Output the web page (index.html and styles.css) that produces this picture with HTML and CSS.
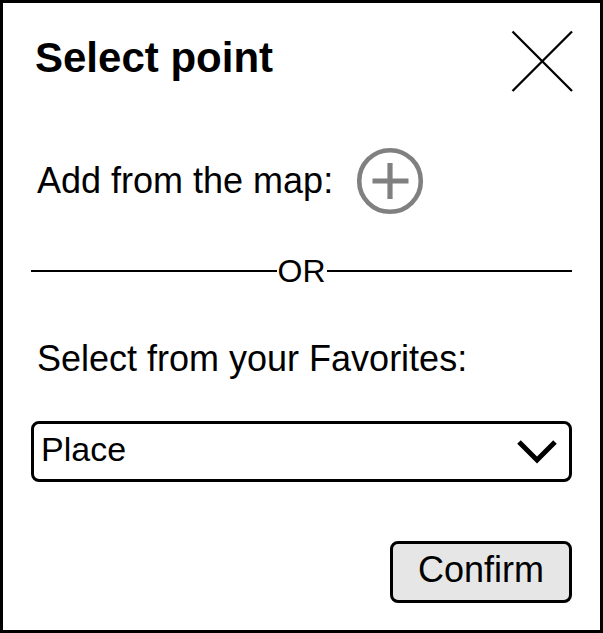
FILE: index.html
```html
<!DOCTYPE html>
<html>
<head>
<meta charset="utf-8">
<link rel="stylesheet" href="styles.css">
</head>
<body>
<div class="dialog">
  <div class="header">
    <h1 class="title">Select point</h1>
    <svg class="close" width="62" height="62" viewBox="0 0 62 62">
      <line x1="1.5" y1="1.5" x2="61" y2="61" stroke="#000" stroke-width="2.3"/>
      <line x1="61" y1="1.5" x2="1.5" y2="61" stroke="#000" stroke-width="2.3"/>
    </svg>
  </div>
  <div class="add-row">
    <span class="label">Add from the map:</span>
    <svg class="plus" width="70" height="70" viewBox="0 0 70 70">
      <circle cx="35" cy="35" r="30.8" fill="none" stroke="#808080" stroke-width="4.6"/>
      <line x1="17.5" y1="35" x2="53.5" y2="35" stroke="#808080" stroke-width="5.2"/>
      <line x1="35" y1="17" x2="35" y2="53" stroke="#808080" stroke-width="5.2"/>
    </svg>
  </div>
  <div class="or-row">
    <span class="rule"></span>
    <span class="or">OR</span>
    <span class="rule"></span>
  </div>
  <div class="label fav">Select from your Favorites:</div>
  <div class="select">
    <span class="value">Place</span>
    <svg class="chev" width="44" height="28" viewBox="0 0 44 28">
      <polyline points="3,4 21,22 39,4" fill="none" stroke="#000" stroke-width="5"/>
    </svg>
  </div>
  <div class="btn">Confirm</div>
</div>
</body>
</html>
```

FILE: styles.css
```css
html, body {
  margin: 0;
  padding: 0;
  background: #fff;
}
body {
  font-family: "Liberation Sans", Arial, sans-serif;
  color: #000;
}
.dialog {
  width: 603px;
  height: 633px;
  box-sizing: border-box;
  border: 3px solid #000;
  padding: 0 28px;
  display: flex;
  flex-direction: column;
}
.header {
  display: flex;
  justify-content: space-between;
  align-items: flex-start;
  padding-top: 27px;
}
.title {
  margin: 4px 0 0 4px;
  font-size: 42px;
  line-height: 48px;
  font-weight: bold;
}
.close {
  display: block;
  margin-right: -1px;
}
.add-row {
  display: flex;
  align-items: center;
  margin-top: 54px;
}
.label {
  font-size: 36px;
  line-height: 40px;
  margin-left: 6px;
}
.plus {
  display: block;
  margin-left: 22px;
}
.or-row {
  display: flex;
  align-items: center;
  margin-top: 40px;
  height: 30px;
}
.rule {
  flex: 1;
  height: 2px;
  background: #000;
}
.or {
  font-size: 32px;
  line-height: 30px;
  padding: 0 1px;
}
.fav {
  margin-top: 53px;
}
.select {
  margin-top: 42px;
  height: 61px;
  box-sizing: border-box;
  border: 3px solid #000;
  border-radius: 8px;
  display: flex;
  align-items: center;
  justify-content: space-between;
  padding: 0 9px 0 7px;
}
.value {
  font-size: 34px;
  line-height: 40px;
  margin-bottom: 6px;
}
.chev {
  display: block;
}
.btn {
  align-self: flex-end;
  margin-top: 59px;
  width: 182px;
  height: 62px;
  box-sizing: border-box;
  border: 3px solid #000;
  border-radius: 8px;
  background: #e6e6e6;
  font-size: 36px;
  padding-bottom: 4px;
  display: flex;
  align-items: center;
  justify-content: center;
}
```
